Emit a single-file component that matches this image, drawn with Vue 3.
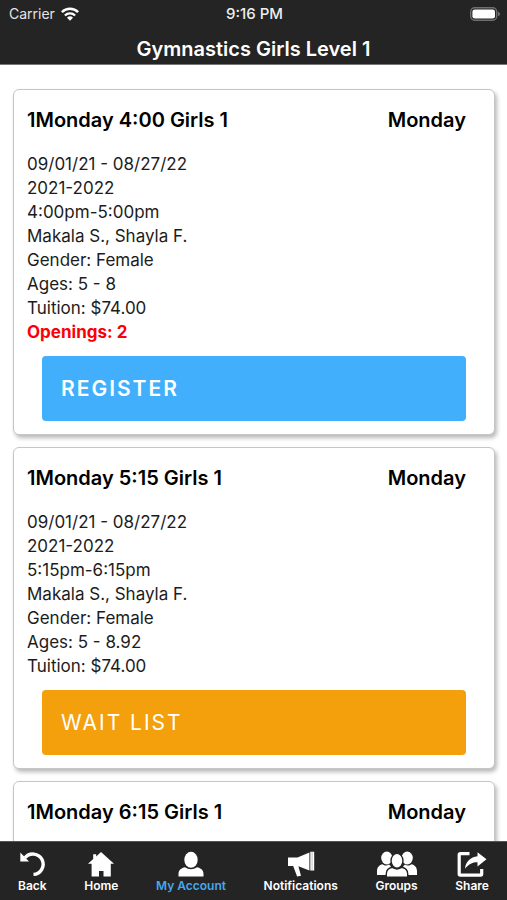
<script setup>
const classes = [
  {
    title: '1Monday 4:00 Girls 1',
    day: 'Monday',
    details: [
      '09/01/21 - 08/27/22',
      '2021-2022',
      '4:00pm-5:00pm',
      'Makala S., Shayla F.',
      'Gender: Female',
      'Ages: 5 - 8',
      'Tuition: $74.00',
    ],
    openings: 2,
  },
  {
    title: '1Monday 5:15 Girls 1',
    day: 'Monday',
    details: [
      '09/01/21 - 08/27/22',
      '2021-2022',
      '5:15pm-6:15pm',
      'Makala S., Shayla F.',
      'Gender: Female',
      'Ages: 5 - 8.92',
      'Tuition: $74.00',
    ],
    openings: 0,
  },
  { title: '1Monday 6:15 Girls 1', day: 'Monday', details: [], openings: 0 },
]
</script>

<template>
  <div class="screen">
    <header class="top">
      <div class="status">
        <span class="carrier">
          Carrier
          <svg class="wifi" viewBox="0 0 18 14" aria-hidden="true">
            <g fill="none" stroke="#fff" stroke-width="2.4">
              <path d="M0.9 5.2a11.4 11.4 0 0 1 16.2 0" />
              <path d="M3.9 8.5a7.2 7.2 0 0 1 10.2 0" />
            </g>
            <path d="M9 13.8 6 10.8a4.3 4.3 0 0 1 6 0z" fill="#fff" />
          </svg>
        </span>
        <span class="time">9:16 PM</span>
        <svg class="battery" viewBox="0 0 30 14" aria-hidden="true">
          <rect x="0.7" y="0.7" width="26" height="12.600" rx="4" fill="none" stroke="#6f6f6f" stroke-width="1.400" />
          <rect x="2.400" y="2.400" width="22.600" height="9.200" rx="2.400" fill="#fff" />
          <path d="M28 4.800c1.300.4 2 1.200 2 2.200s-.7 1.800-2 2.200z" fill="#6f6f6f" />
        </svg>
      </div>
      <h1>Gymnastics Girls Level 1</h1>
    </header>

    <main class="list">
      <article v-for="c in classes" :key="c.title" class="card">
        <div class="heading">
          <h2>{{ c.title }}</h2>
          <span>{{ c.day }}</span>
        </div>
        <ul v-if="c.details.length" class="details">
          <li v-for="d in c.details" :key="d">{{ d }}</li>
          <li v-if="c.openings" class="openings">Openings: {{ c.openings }}</li>
        </ul>
        <template v-if="c.details.length">
          <button v-if="c.openings" type="button" class="action register">REGISTER</button>
          <button v-else type="button" class="action wait">WAIT LIST</button>
        </template>
      </article>
    </main>

    <nav class="tabs">
      <a href="#back">
        <svg width="28" height="26" viewBox="0 0 28 26" aria-hidden="true">
          <path d="M7 6.800A10.200 10.200 0 1 1 15.500 23.400" fill="none" stroke="#fff" stroke-width="3.400" />
          <path d="M2.300 1.500V10.500H11z" fill="#fff" />
        </svg>
        <span>Back</span>
      </a>
      <a href="#home">
        <svg width="26" height="26" viewBox="0 0 26 26" aria-hidden="true">
          <path d="M13 1 26 12.800h-3.200V25.500h-7.300V20h-4.500v5.500H3.600V12.800H0L5.200 8V3.200h3V5.400z" fill="#fff" />
        </svg>
        <span>Home</span>
      </a>
      <a href="#account" class="active">
        <svg width="26" height="26" viewBox="0 0 26 26" aria-hidden="true">
          <ellipse cx="13" cy="8.800" rx="6.700" ry="8" fill="#fff" />
          <path d="M0.500 25.500v-2.500c0-4 3-6 6.500-6.700 3.500 2.600 8.500 2.600 12 0 3.500.7 6.500 2.700 6.500 6.700v2.500z" fill="#fff" />
        </svg>
        <span>My Account</span>
      </a>
      <a href="#notifications">
        <svg width="28" height="26" viewBox="0 0 28 26" aria-hidden="true">
          <path d="M1 6.500h9.500L22.400 1.600v17.900l-11-4.300 2.600 9.500-3.900.9L6.200 15H1z" fill="#fff" />
          <path d="M23.300.800H27.200V19.600h-3.900z" fill="#fff" />
          <path d="M25.100 1v18.400" stroke="#aaa" stroke-width=".7" />
        </svg>
        <span>Notifications</span>
      </a>
      <a href="#groups">
        <svg width="40" height="26" viewBox="0 0 40 26" aria-hidden="true">
          <g fill="#fff">
            <ellipse cx="9.800" cy="7" rx="5.600" ry="6.400" />
            <path d="M0 24v-4c0-4 2.500-6 5.500-6.800 1.800 1.600 4.600 1.800 6.500.4l2 2L9.500 20v4z" />
            <ellipse cx="30.200" cy="7" rx="5.600" ry="6.400" />
            <path d="M40 24v-4c0-4-2.500-6-5.500-6.800-1.800 1.600-4.600 1.800-6.500.4l-2 2 4.500 4.400v4z" />
          </g>
          <g fill="#fff" stroke="#242424" stroke-width="1.400">
            <path d="M9.300 26.200v-3.200c0-4 2.600-6 6-6.700 2.600 2.200 6.800 2.200 9.400 0 3.400.7 6 2.700 6 6.700v3.200z" />
            <ellipse cx="20" cy="9.800" rx="6" ry="7.400" />
          </g>
        </svg>
        <span>Groups</span>
      </a>
      <a href="#share">
        <svg width="30" height="26" viewBox="0 0 30 26" aria-hidden="true">
          <path d="M12.500 2.700H3.200a1 1 0 0 0-1 1v19.400a1 1 0 0 0 1 1h20.500a1 1 0 0 0 1-1V18" fill="none" stroke="#fff" stroke-width="3.200" />
          <path d="M20.500 1.200 29.500 8.300l-9 7.300v-4.300c-5 0-8.500 1.700-12.500 6.500.5-7 5.500-12 12.500-12.600z" fill="#fff" />
        </svg>
        <span>Share</span>
      </a>
    </nav>
  </div>
</template>

<style>
body {
  background: #fff;
}
</style>

<style scoped>
.screen {
  display: flex;
  flex-direction: column;
  height: 100vh;
  font-family: Inter, "Liberation Sans", sans-serif;
  color: #000;
}
.top {
  flex: none;
  background: #242424;
  color: #fff;
  border-bottom: 1px solid #777;
}
.status {
  display: grid;
  grid-template-columns: 1fr auto 1fr;
  align-items: center;
  height: 27px;
  padding: 0 7px 0 9px;
  font-size: 14px;
}
.carrier {
  display: flex;
  align-items: center;
  gap: 6px;
  color: #e4e4e4;
}
.wifi {
  width: 18px;
  height: 14px;
}
.time {
  font-size: 15px;
  font-weight: 500;
  color: #eee;
}
.battery {
  justify-self: end;
  width: 30px;
  height: 14px;
}
h1 {
  margin: 0;
  padding: 10px 0 3px;
  font-size: 20px;
  line-height: 24px;
  font-weight: 600;
  text-align: center;
}
.list {
  flex: 1;
  min-height: 0;
  overflow: hidden;
  display: flex;
  flex-direction: column;
  gap: 12px;
  padding: 24px 12px 0 13px;
}
.card {
  flex: none;
  box-sizing: border-box;
  min-height: 320px;
  padding: 18px 28px 13px 13px;
  border: 1px solid #c6c6c6;
  border-radius: 6px;
  background: #fff;
  box-shadow: 2px 3px 4px rgba(0, 0, 0, 0.28);
}
.heading {
  display: flex;
  justify-content: space-between;
  font-size: 20px;
  line-height: 24px;
  font-weight: 600;
}
h2 {
  margin: 0;
  font: inherit;
}
.details {
  margin: 20px 0 12px;
  padding: 0;
  list-style: none;
  font-size: 17px;
  line-height: 24px;
  color: #1c1c1c;
}
.openings {
  color: #fb0007;
  font-weight: 700;
}
.action {
  display: block;
  width: calc(100% - 15px);
  margin-left: 15px;
  height: 65px;
  padding: 0 19px;
  border: 0;
  border-radius: 4px;
  color: #fff;
  font-family: inherit;
  font-size: 21px;
  letter-spacing: 2px;
  text-align: left;
}
.register {
  background: #41affc;
  font-weight: 600;
}
.wait {
  background: #f3a00c;
}
.tabs {
  flex: none;
  display: flex;
  justify-content: space-between;
  box-sizing: border-box;
  height: 59px;
  padding: 9px 18px 0;
  border-top: 1px solid #555;
  background: #242424;
}
.tabs a {
  display: flex;
  flex-direction: column;
  align-items: center;
  color: #fff;
  font-size: 12px;
  line-height: 18px;
  font-weight: 600;
  text-decoration: none;
}
.tabs .active {
  color: #45a9ee;
}
</style>
